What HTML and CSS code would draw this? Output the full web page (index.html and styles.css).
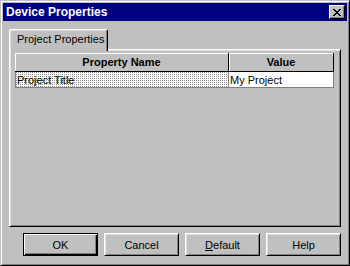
FILE: index.html
```html
<!DOCTYPE html>
<html lang="en">
<head>
  <meta charset="UTF-8" />
  <title>Device Properties</title>
  <link rel="stylesheet" href="styles.css">
</head>
<body>

  <div class="window">
    <!-- title bar -->
    <div class="titlebar">
      <span class="title">Device Properties</span>
      <button class="close" aria-label="Close">
        <svg width="8" height="7" viewBox="0 0 8 7" shape-rendering="crispEdges">
          <path fill="#000" d="M0 0h2v1H0z M6 0h2v1H6z M1 1h2v1H1z M5 1h2v1H5z M2 2h4v1H2z M3 3h2v1H3z M2 4h4v1H2z M1 5h2v1H1z M5 5h2v1H5z M0 6h2v1H0z M6 6h2v1H6z"/>
        </svg>
      </button>
    </div>

    <div class="content">
      <!-- tabs -->
      <div class="tabs">
        <div class="tab active">Project Properties</div>
      </div>

      <!-- tab page -->
      <div class="panel">
        <table class="grid">
          <thead>
            <tr>
              <th class="col-name">Property Name</th>
              <th class="col-value">Value</th>
            </tr>
          </thead>
          <tbody>
            <tr>
              <td class="col-name selected">Project Title</td>
              <td class="col-value">My Project</td>
            </tr>
          </tbody>
        </table>
      </div>

      <!-- dialog buttons -->
      <div class="buttons">
        <button class="btn default">OK</button>
        <button class="btn">Cancel</button>
        <button class="btn"><u>D</u>efault</button>
        <button class="btn">Help</button>
      </div>
    </div>
  </div>

</body>
</html>
```

FILE: styles.css
```css
html, body {
  margin: 0;
  padding: 0;
  background: #c0c0c0;
  font-family: "Liberation Sans", Arial, sans-serif;
  font-size: 11px;
  color: #000;
}

.window {
  width: 350px;
  height: 266px;
  box-sizing: border-box;
  display: flex;
  flex-direction: column;
  padding: 2px;
  background: #c0c0c0;
  border: 1px solid;
  border-color: #c0c0c0 #000 #000 #c0c0c0;
  box-shadow: inset 1px 1px #fff, inset -1px -1px #808080;
}

/* title bar */
.titlebar {
  height: 18px;
  flex: none;
  display: flex;
  align-items: center;
  justify-content: space-between;
  padding: 0 2px 0 3px;
  background: #000080;
  color: #fff;
}

.title {
  font-weight: bold;
  font-size: 12px;
}

.close {
  width: 16px;
  height: 14px;
  box-sizing: border-box;
  padding: 0;
  display: flex;
  align-items: center;
  justify-content: center;
  background: #c0c0c0;
  border: 1px solid;
  border-color: #fff #000 #000 #fff;
  box-shadow: inset -1px -1px #808080;
}

/* body */
.content {
  flex: 1;
  display: flex;
  flex-direction: column;
  padding: 8px 6px 0 6px;
}

.tabs {
  display: flex;
  height: 20px;
  flex: none;
}

.tab {
  position: relative;
  z-index: 1;
  width: 99px;
  height: 22px;
  box-sizing: border-box;
  padding: 3px 0 0 7px;
  background: #c0c0c0;
  border-left: 1px solid #fff;
  border-top: 1px solid #fff;
  border-right: 1px solid #000;
  border-radius: 2px 2px 0 0;
  box-shadow: inset -1px 0 #808080, inset 1px 1px #dfdfdf;
  white-space: nowrap;
}

.panel {
  height: 178px;
  flex: none;
  box-sizing: border-box;
  padding: 3px 6px 0 5px;
  border: 1px solid;
  border-color: #fff #000 #000 #fff;
  box-shadow: inset 1px 1px #dfdfdf, inset -1px -1px #808080;
}

/* property grid */
.grid {
  width: 100%;
  border-collapse: separate;
  border-spacing: 0;
  table-layout: fixed;
}

.grid .col-name {
  width: 214px;
}

.grid th {
  height: 19px;
  box-sizing: border-box;
  padding: 0;
  font-weight: bold;
  text-align: center;
  background: #c0c0c0;
  border-right: 1px solid #000;
  border-bottom: 1px solid #000;
  box-shadow: inset 1px 1px #fff;
}

.grid td {
  height: 16px;
  box-sizing: border-box;
  padding: 0 0 0 1px;
  text-align: left;
  background: #fff;
  border-right: 1px solid #808080;
  border-bottom: 1px solid #808080;
  white-space: nowrap;
}

.grid td.col-name {
  border-left: 1px solid #808080;
}

.grid td.selected {
  background: conic-gradient(#fff 0 75%, #909090 0) 0 0 / 2px 2px;
}

/* buttons */
.buttons {
  display: flex;
  justify-content: flex-end;
  gap: 6px;
  margin-top: 6px;
}

.btn {
  width: 75px;
  height: 23px;
  box-sizing: border-box;
  padding: 0;
  font-family: "Liberation Sans", Arial, sans-serif;
  font-size: 11px;
  color: #000;
  background: #c0c0c0;
  border: 1px solid;
  border-color: #fff #000 #000 #fff;
  box-shadow: inset 1px 1px #dfdfdf, inset -1px -1px #808080;
}

.btn.default {
  border-color: #000;
  box-shadow: inset 1px 1px #fff, inset -1px -1px #000, inset -2px -2px #808080;
}

.btn u {
  text-decoration: underline;
}
```
